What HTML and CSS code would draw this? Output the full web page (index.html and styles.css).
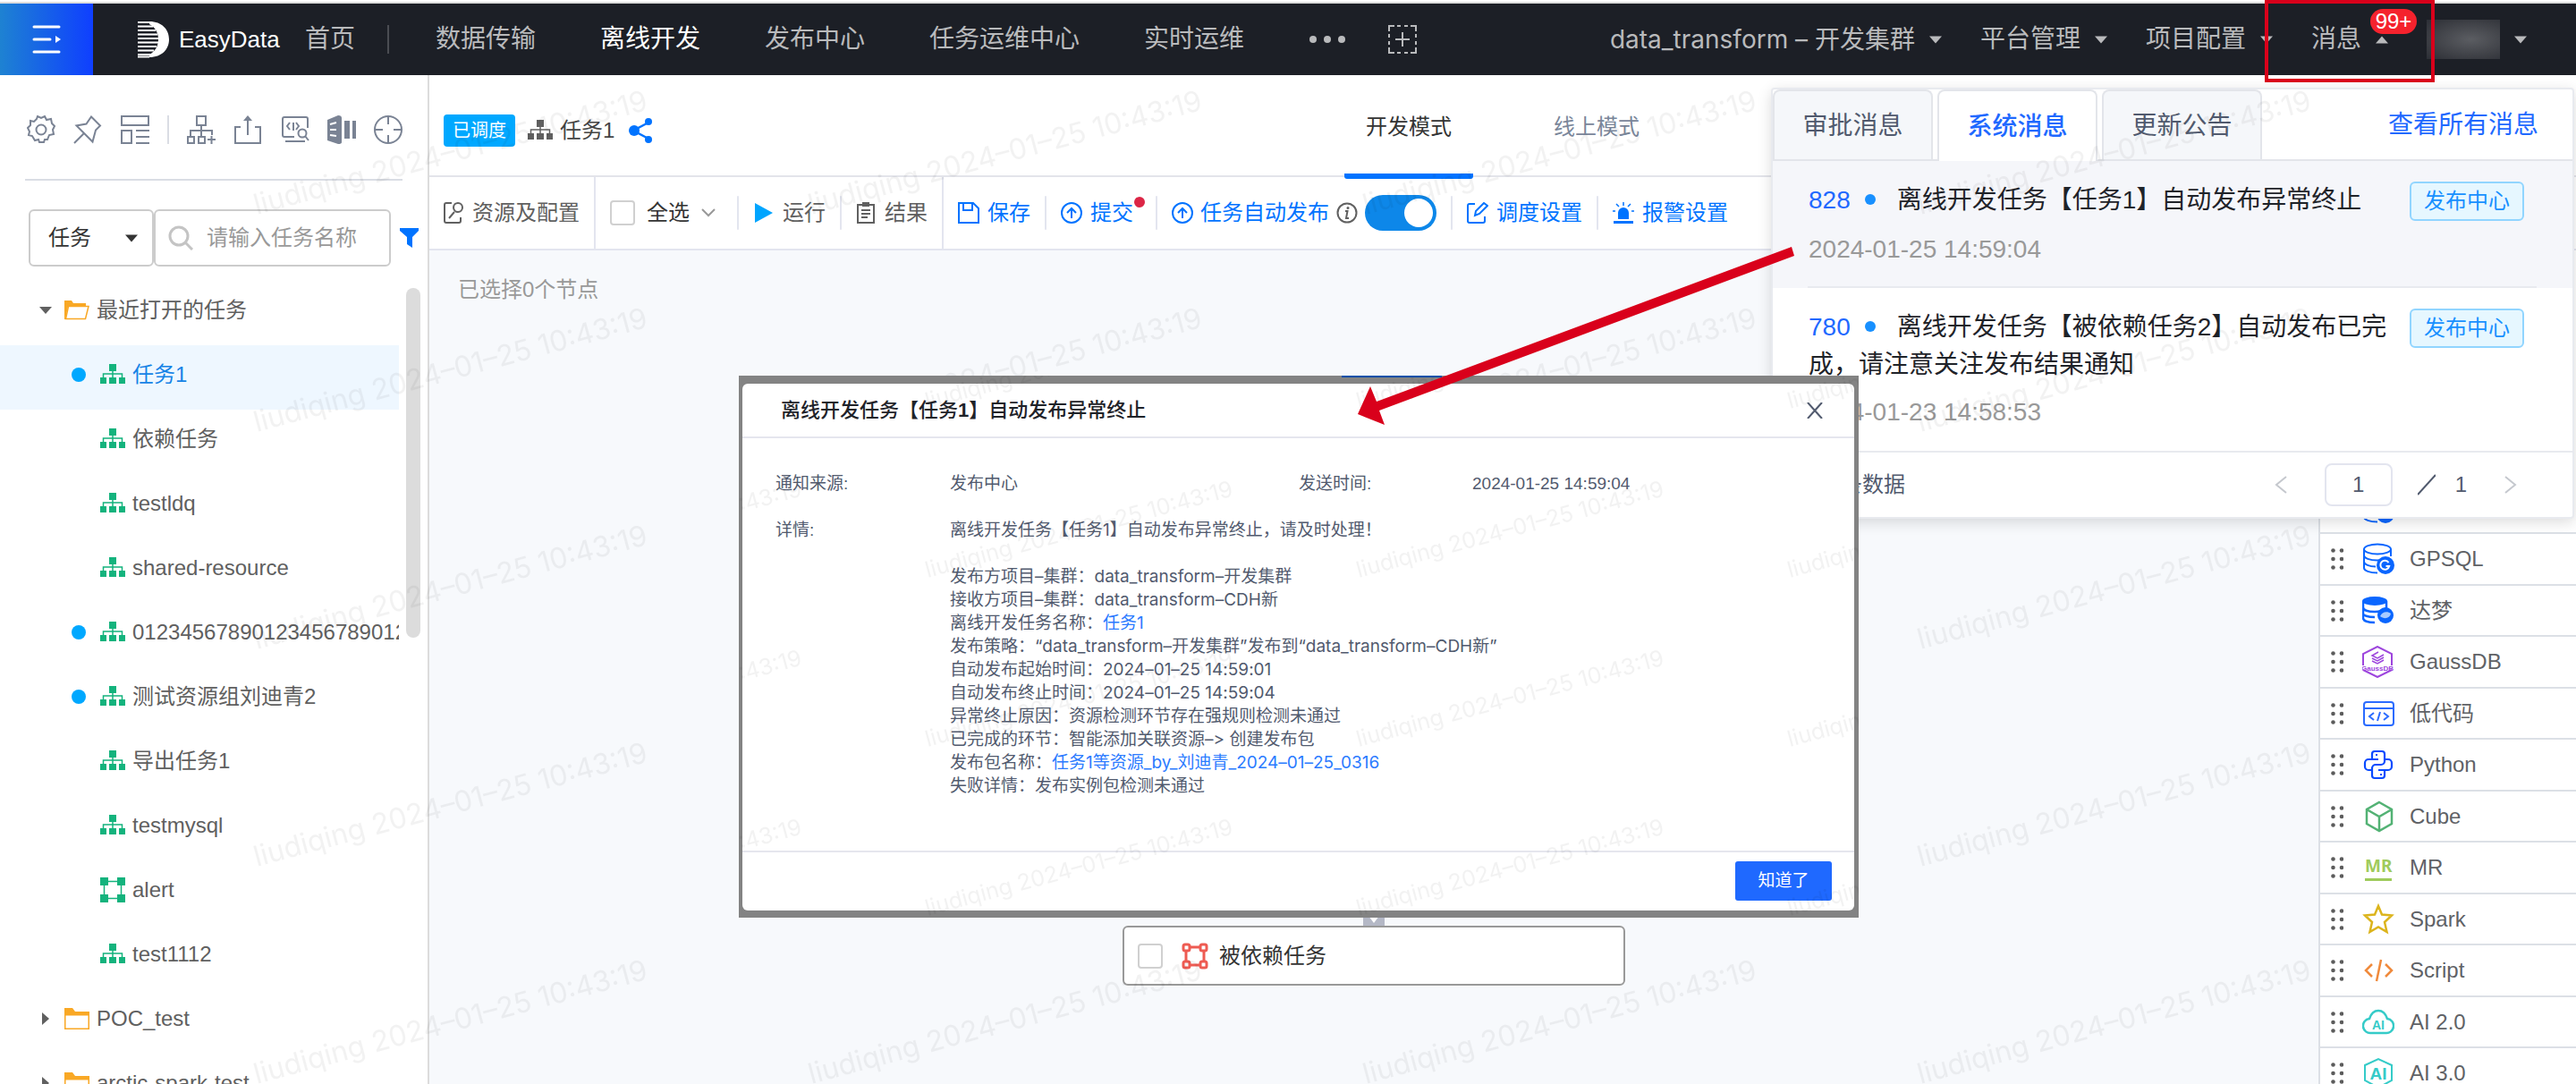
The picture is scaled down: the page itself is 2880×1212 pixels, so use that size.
FILE: index.html
```html
<!DOCTYPE html>
<html lang="zh-CN">
<head>
<meta charset="utf-8">
<title>EasyData 离线开发</title>
<link rel="stylesheet" href="styles.css">
</head>
<body>
<svg class="defs" aria-hidden="true">
  <symbol id="i-tree" viewBox="0 0 28 24"><path fill="currentColor" d="M10 0h8v8h-8zM0 15h7v7H0zM10 15h8v7h-8zM21 15h7v7h-7z"/><path d="M14 8v8M3.500 16v-5h21v5" fill="none" stroke="currentColor" stroke-width="1.500"/></symbol>
  <symbol id="i-flow" viewBox="0 0 28 28"><path fill="currentColor" d="M0 0h9v9H0zM19 0h9v9h-9zM0 19h9v9H0zM19 19h9v9h-9z"/><path d="M4.500 4.500h19v19h-19z" fill="none" stroke="currentColor" stroke-width="1.500"/></symbol>
  <symbol id="i-open" viewBox="0 0 28 22"><path d="M0 0h8l2 3h14v4H4L1 21H0z" fill="#f9a825"/><path d="M4.500 6.500h22.500l-3.500 14h-22z" fill="#fff" stroke="#f9a825" stroke-width="1.500"/></symbol>
  <symbol id="i-folder" viewBox="0 0 28 24"><path d="M.75 6v17.250h26.500V6z" fill="#fff" stroke="#f9a825" stroke-width="1.500"/><path d="M0 0h9l3 4h16v4.500H0z" fill="#f9a825"/></symbol>
  <symbol id="i-down" viewBox="0 0 14 8"><path d="M0 0h14L7 8z" fill="currentColor"/></symbol>
  <symbol id="i-up" viewBox="0 0 14 8"><path d="M0 8h14L7 0z" fill="currentColor"/></symbol>
  <symbol id="i-right" viewBox="0 0 8 14"><path d="M0 0v14l8-7z" fill="currentColor"/></symbol>
  <symbol id="i-upload" viewBox="0 0 24 24"><g fill="none" stroke="currentColor" stroke-width="2"><circle cx="12" cy="12" r="11"/><path d="M12 18V7M7 12l5-5 5 5"/></g></symbol>
  <symbol id="i-grip" viewBox="0 0 14 24"><g fill="#5c5c5c"><circle cx="2.500" cy="2.500" r="2.300"/><circle cx="12" cy="2.500" r="2.300"/><circle cx="2.500" cy="12" r="2.300"/><circle cx="12" cy="12" r="2.300"/><circle cx="2.500" cy="21.500" r="2.300"/><circle cx="12" cy="21.500" r="2.300"/></g></symbol>
  <symbol id="i-db" viewBox="0 0 36 36"><g fill="none" stroke="#0a66ff" stroke-width="2"><ellipse cx="17" cy="7" rx="15" ry="5.500"/><path d="M2 7v21c0 3 6 5.500 15 5.500M32 7v8M2 14c0 3 6 5.500 15 5.500M2 21c0 3 6 5.500 13 5.500M17 19.500c5 0 9-1 12-2.500"/></g><circle cx="26" cy="25" r="10" fill="#0a66ff"/></symbol>
</svg>

<header class="topbar">
  <button class="menu-btn" aria-label="菜单"><svg width="32" height="32" viewBox="0 0 32 32"><path d="M2 2h28M2 16h18M2 30h28" stroke="#fff" stroke-width="3" stroke-linecap="round"/><path d="M26 12v8l6-4z" fill="#fff"/></svg></button>
  <a class="logo" href="#">
    <svg width="36" height="42" viewBox="0 0 36 42"><path d="M13 1C27 1 35 10 35 21S27 41 13 41v-3c7-4 10-10 10-17S20 8 13 4z" fill="#fff"/><path d="M0 2h14M0 6.500h17M0 11h20M0 15.500h22M0 20h23M0 24.500h23M0 29h21M0 33.500h18M0 38h14M0 40.500h13" stroke="#fff" stroke-width="2"/></svg>
    <span>EasyData</span>
  </a>
  <a class="home" href="#">首页</a>
  <nav class="nav">
    <a href="#">数据传输</a><a href="#" class="on">离线开发</a><a href="#">发布中心</a><a href="#">任务运维中心</a><a href="#">实时运维</a>
    <button class="more" aria-label="更多"><svg width="42" height="10" viewBox="0 0 42 10" fill="currentColor"><circle cx="5" cy="5" r="4"/><circle cx="21" cy="5" r="4"/><circle cx="37" cy="5" r="4"/></svg></button>
  </nav>
  <button class="add" aria-label="添加"><svg width="32" height="32" viewBox="0 0 32 32" fill="none" stroke="currentColor" stroke-width="2"><path d="M1 7V1h6M25 1h6v6M31 25v6h-6M7 31H1v-6M10 1h4M18 1h4M10 31h4M18 31h4M1 10v4M1 18v4M31 10v4M31 18v4M16 8v16M8 16h16"/></svg></button>
  <div class="user-nav">
    <button class="project">data_transform – 开发集群<svg class="caret"><use href="#i-down"/></svg></button>
    <button>平台管理<svg class="caret"><use href="#i-down"/></svg></button>
    <button>项目配置<svg class="caret"><use href="#i-down"/></svg></button>
    <button class="msg">消息<svg class="caret"><use href="#i-up"/></svg><span class="count">99+</span></button>
    <button aria-label="用户"><span class="avatar"></span><svg class="caret"><use href="#i-down"/></svg></button>
  </div>
</header>

<div class="body">
  <aside class="sidebar">
    <div class="tools">
      <button aria-label="设置"><svg viewBox="0 0 32 32"><path d="M11 4l1-3 4 2 4-2 2 4 5-1 1 5 3 3-2 4 1 5-5 1-2 5h-3l-1 3h-5l-1-3-4 1-3-5-4-1 1-4-2-4 3-3v-5l4 1z"/><circle cx="16" cy="16" r="5.500"/></svg></button>
      <button aria-label="固定"><svg viewBox="0 0 32 32"><path d="M20 1.500l10 10-5 5-3.500 13-9-9-9-9 11-2zM12 20L1 31"/></svg></button>
      <button aria-label="布局"><svg viewBox="0 0 32 32"><path d="M1 1h30v10H1zM1 17h11v14H1zM17 17h15M17 24h15M17 31h15"/></svg></button>
      <i class="rule"></i>
      <button aria-label="新建任务"><svg viewBox="0 0 32 32"><path d="M11 1h10v10H11zM16 11v13M4 24v-7h24v5M1 24h7v7H1zM13 24h7v7h-7zM23 27h9M27.500 23v9"/></svg></button>
      <button aria-label="导出"><svg viewBox="0 0 32 32"><path d="M8 13H2v18h28V13h-6M16 22V4"/><path d="M11 6l5-6 5 6z" fill="currentColor" stroke="none"/></svg></button>
      <button aria-label="代码搜索"><svg viewBox="0 0 32 32"><path d="M15 24H4a2 2 0 0 1-2-2V4a2 2 0 0 1 2-2h24a2 2 0 0 1 2 2v10M10 8l-3 4 3 4M17 8l3 4-3 4M14 8v9M5 29h22"/><circle cx="24" cy="20" r="4.500"/><path d="M27 23l4 5"/></svg></button>
      <button aria-label="文档"><svg viewBox="0 0 32 32"><path d="M0 5L12 0q4 0 4 3v27q0 2-4 2L0 28zM19 6h6v20h-6zM28 6h4v20h-4z" fill="currentColor" stroke="none"/><path d="M3 10l7-2M3 16h7M3 22l7 1" stroke="#fff"/></svg></button>
      <button aria-label="定位"><svg viewBox="0 0 32 32"><circle cx="16" cy="16" r="15"/><path d="M16 1v9M16 22v9M1 16h9M22 16h9"/></svg></button>
    </div>
    <form class="search">
      <label class="kind"><select aria-label="类型"><option>任务</option></select><svg class="caret"><use href="#i-down"/></svg></label>
      <label class="query"><svg width="28" height="28" viewBox="0 0 28 28" fill="none" stroke="#c4c4c4" stroke-width="3"><circle cx="12" cy="12" r="10"/><path d="M19 19l8 8"/></svg><input type="text" placeholder="请输入任务名称" aria-label="任务名称"></label>
      <button type="button" class="filter" aria-label="筛选"><svg width="21" height="22" viewBox="0 0 21 22"><path d="M0 0h21v3l-7 7v12l-6-4v-8L0 3z" fill="#0073ff"/></svg></button>
    </form>
    <div class="tree-wrap">
      <ul class="tree">
        <li><a class="dir" href="#"><svg class="arrow"><use href="#i-down"/></svg><svg class="ficon"><use href="#i-open"/></svg>最近打开的任务</a></li>
        <li><a class="on" href="#"><i class="dot"></i><svg class="ticon"><use href="#i-tree"/></svg>任务1</a></li>
        <li><a href="#"><i></i><svg class="ticon"><use href="#i-tree"/></svg>依赖任务</a></li>
        <li><a href="#"><i></i><svg class="ticon"><use href="#i-tree"/></svg>testldq</a></li>
        <li><a href="#"><i></i><svg class="ticon"><use href="#i-tree"/></svg>shared-resource</a></li>
        <li><a href="#"><i class="dot"></i><svg class="ticon"><use href="#i-tree"/></svg>01234567890123456789012</a></li>
        <li><a href="#"><i class="dot"></i><svg class="ticon"><use href="#i-tree"/></svg>测试资源组刘迪青2</a></li>
        <li><a href="#"><i></i><svg class="ticon"><use href="#i-tree"/></svg>导出任务1</a></li>
        <li><a href="#"><i></i><svg class="ticon"><use href="#i-tree"/></svg>testmysql</a></li>
        <li><a href="#"><i></i><svg class="ticon flow"><use href="#i-flow"/></svg>alert</a></li>
        <li><a href="#"><i></i><svg class="ticon"><use href="#i-tree"/></svg>test1112</a></li>
        <li><a class="dir" href="#"><svg class="arrow"><use href="#i-right"/></svg><svg class="ficon"><use href="#i-folder"/></svg>POC_test</a></li>
        <li><a class="dir" href="#"><svg class="arrow"><use href="#i-right"/></svg><svg class="ficon"><use href="#i-folder"/></svg>arctic-spark-test</a></li>
      </ul>
      <div class="thumb"></div>
    </div>
  </aside>

  <main class="main">
    <div class="titlebar">
      <div class="task-title">
        <span class="state">已调度</span>
        <svg class="ticon"><use href="#i-tree"/></svg>
        <span>任务1</span>
        <svg class="share" width="26" height="28" viewBox="0 0 26 28"><path d="M22 5L5 14l17 9" fill="none" stroke="#0073ff" stroke-width="2.500"/><g fill="#0073ff"><circle cx="22" cy="4" r="4"/><circle cx="6" cy="14" r="6"/><circle cx="22" cy="24" r="4"/></g></svg>
      </div>
      <div class="modes"><button class="on">开发模式</button><button>线上模式</button></div>
    </div>
    <div class="toolbar">
      <section>
        <button class="dark"><svg width="22" height="24" viewBox="0 0 22 24" fill="none" stroke="currentColor" stroke-width="2"><path d="M9 1H3a2 2 0 0 0-2 2v18a2 2 0 0 0 2 2h14a2 2 0 0 0 2-2v-4M12 11l-6 7"/><circle cx="16" cy="6" r="5"/></svg>资源及配置</button>
      </section>
      <section>
        <label class="all"><input type="checkbox" class="box">全选<svg width="16" height="10" viewBox="0 0 16 10" fill="none" stroke="#999" stroke-width="2"><path d="M1 1l7 7 7-7"/></svg></label>
        <i class="sep wide"></i>
        <button class="dark"><svg width="22" height="24" viewBox="0 0 22 24"><path d="M1 1v22l20-11z" fill="#00a5ff"/></svg>运行</button>
        <i class="sep"></i>
        <button class="dark"><svg width="22" height="24" viewBox="0 0 22 24" fill="none" stroke="currentColor" stroke-width="2"><path d="M2 3h18v20H2zM6 9h10M6 13h10M6 17h7"/><path d="M7 0h8v5H7z" fill="currentColor" stroke="none"/></svg>结果</button>
      </section>
      <section class="last">
        <button><svg width="24" height="24" viewBox="0 0 24 24" fill="none" stroke="currentColor" stroke-width="2"><path d="M1 1h16l6 6v16H1zM6 1v8h10V1"/></svg>保存</button>
        <i class="sep"></i>
        <button class="submit"><svg width="24" height="24"><use href="#i-upload"/></svg>提交<i class="reddot"></i></button>
        <i class="sep"></i>
        <label class="auto"><svg width="24" height="24"><use href="#i-upload"/></svg>任务自动发布<svg class="info" width="24" height="24" viewBox="0 0 24 24"><g fill="none" stroke="currentColor" stroke-width="2"><circle cx="12" cy="12" r="10.500"/><path d="M10 10h2.500l-1.500 8h3"/></g><circle cx="13" cy="6.500" r="1.500" fill="currentColor"/></svg><input type="checkbox" class="switch" checked></label>
        <i class="sep"></i>
        <button><svg width="24" height="24" viewBox="0 0 24 24" fill="none" stroke="currentColor" stroke-width="2"><path d="M9 2H3a2 2 0 0 0-2 2v17a2 2 0 0 0 2 2h15a2 2 0 0 0 2-2v-5M9 15l1-5 9-9 4 3-9 9z"/></svg>调度设置</button>
        <i class="sep"></i>
        <button><svg width="24" height="24" viewBox="0 0 24 24"><path d="M1 21h22v3H1zM6 19v-7a6 6 0 0 1 12 0v7z" fill="currentColor"/><path d="M12 0v4M4 2l3 3M20 2l-3 3M0 10h3M21 10h3" stroke="currentColor" stroke-width="1.500"/></svg>报警设置</button>
      </section>
    </div>
    <div class="work">
      <div class="canvas">
        <p>已选择0个节点</p>
        <svg class="joint" width="24" height="14" viewBox="0 0 24 14"><path d="M0 0h24v14H0z" fill="#b4b8c6"/><path d="M6 0h12l-6 8z" fill="#fff"/></svg>
        <label class="node"><input type="checkbox" class="box"><svg width="30" height="30" viewBox="0 0 30 30" fill="none" stroke="#ee5b52" stroke-width="3"><path d="M9 5h12M9 25h12M5 9v12M25 9v12"/><rect x="2" y="2" width="7" height="7" rx="2"/><rect x="21" y="2" width="7" height="7" rx="2"/><rect x="2" y="21" width="7" height="7" rx="2"/><rect x="21" y="21" width="7" height="7" rx="2"/></svg>被依赖任务</label>
      </div>
      <ul class="palette">
        <li><svg class="pic first"><use href="#i-db"/></svg></li>
        <li><svg class="grip"><use href="#i-grip"/></svg><svg class="pic" viewBox="0 0 36 36"><use href="#i-db" width="36" height="36"/><path d="M29.500 22a5 5 0 1 0 .7 4H26.500" fill="none" stroke="#fff" stroke-width="2"/></svg>GPSQL</li>
        <li><svg class="grip"><use href="#i-grip"/></svg><svg class="pic" viewBox="0 0 36 36"><ellipse cx="14" cy="7" rx="14" ry="5" fill="#0a66ff"/><path d="M1 7v19c0 3 5 5 13 5M27 7v9M1 14c0 3 5 5 13 5 5 0 9-1 13-4M1 21c0 2 5 4 13 4" fill="none" stroke="#0a66ff" stroke-width="2.500"/><circle cx="26" cy="23" r="9" fill="#0a66ff"/><path d="M20 24c2-5 8-6 12-3-1 5-7 7-12 3z" fill="#a9cbff"/></svg>达梦</li>
        <li><svg class="grip"><use href="#i-grip"/></svg><svg class="pic" viewBox="0 0 36 36"><path d="M1 22V9L17 1l16 8v13M1 27l16 8 16-8" fill="none" stroke="#9d45dd" stroke-width="2"/><path d="M18 7l-7 4 6 3 7-4M11 14l6 3 7-4M11 17l6 3 7-4" fill="none" stroke="#9d45dd" stroke-width="1.500"/><text x="17" y="28" class="gauss" text-anchor="middle">GaussDB</text></svg>GaussDB</li>
        <li><svg class="grip"><use href="#i-grip"/></svg><svg class="pic" viewBox="0 0 36 36" fill="none" stroke="#2a6bff" stroke-width="2"><rect x="2" y="5" width="33" height="26" rx="3"/><path d="M2 12h33M13 17l-5 4 5 4M24 17l5 4-5 4M20 16l-3 10"/></svg>低代码</li>
        <li><svg class="grip"><use href="#i-grip"/></svg><svg class="pic" viewBox="0 0 36 36" fill="none" stroke="#0a4bff" stroke-width="2.200"><path d="M11 24H7a4 4 0 0 1-4-4v-4a4 4 0 0 1 4-4h11M11 12V6a3 3 0 0 1 3-3h8a3 3 0 0 1 3 3v8a4 4 0 0 1-4 4h-6a4 4 0 0 0-4 4v8a3 3 0 0 0 3 3h8a3 3 0 0 0 3-3v-6M25 12h4a4 4 0 0 1 4 4v4a4 4 0 0 1-4 4H18M15 7h2M20 29h2"/></svg>Python</li>
        <li><svg class="grip"><use href="#i-grip"/></svg><svg class="pic" viewBox="0 0 36 36" fill="none" stroke="#53b274" stroke-width="2.500"><path d="M19 2l14 8v16l-14 8-14-8V10zM5 10l14 8 14-8M19 18v16"/></svg>Cube</li>
        <li><svg class="grip"><use href="#i-grip"/></svg><span class="pic mr">MR</span>MR</li>
        <li><svg class="grip"><use href="#i-grip"/></svg><svg class="pic" viewBox="0 0 36 36" fill="none" stroke="#dcb41c" stroke-width="2.500"><path d="M18 3l4 9.500 11 1-8 7.500 2.500 11L18 26.500 8.500 32 11 21l-8-7.500 11-1z"/></svg>Spark</li>
        <li><svg class="grip"><use href="#i-grip"/></svg><svg class="pic" viewBox="0 0 36 36" fill="none" stroke="#f08a3c" stroke-width="2.500"><path d="M11 11l-7 7 7 7M26 11l7 7-7 7M21 6l-5 24"/></svg>Script</li>
        <li><svg class="grip"><use href="#i-grip"/></svg><svg class="pic" viewBox="0 0 36 36"><path d="M10 30a8 8 0 0 1-2-16C10 8 14 5 18 5s8 3 10 9a8 8 0 0 1-2 16z" fill="none" stroke="#35cbc8" stroke-width="2.500"/><text x="18" y="26" class="ai" font-size="14" text-anchor="middle">AI</text></svg>AI 2.0</li>
        <li><svg class="grip"><use href="#i-grip"/></svg><svg class="pic" viewBox="0 0 36 36"><path d="M3 26V9l15-7 15 7v17l-15 8z" fill="none" stroke="#35cbc8" stroke-width="2"/><text x="18" y="25" class="ai" font-size="19" text-anchor="middle">AI</text></svg>AI 3.0</li>
      </ul>
    </div>
  </main>
</div>

<section class="messages">
  <div class="tabs">
    <button>审批消息</button><button class="on">系统消息</button><button>更新公告</button>
    <a href="#">查看所有消息</a>
  </div>
  <article class="unread">
    <div class="row"><h3><b>828</b><i></i>离线开发任务【任务1】自动发布异常终止</h3><span class="tag">发布中心</span></div>
    <time>2024-01-25 14:59:04</time>
  </article>
  <article>
    <div class="row"><h3><b>780</b><i></i>离线开发任务【被依赖任务2】自动发布已完成，请注意关注发布结果通知</h3><span class="tag">发布中心</span></div>
    <time>2024-01-23 14:58:53</time>
  </article>
  <footer>
    <span class="total">条数据</span>
    <button aria-label="上一页"><svg width="14" height="20" viewBox="0 0 14 20"><path d="M13 1L2 10l11 9"/></svg></button>
    <input type="text" value="1" aria-label="页码">
    <span class="pages"><svg width="20" height="24" viewBox="0 0 20 24"><path d="M0 23L20 1" stroke="#515a6e" stroke-width="2"/></svg>1</span>
    <button aria-label="下一页"><svg width="14" height="20" viewBox="0 0 14 20"><path d="M1 1l11 9-11 9"/></svg></button>
  </footer>
</section>

<svg class="mark page-mark" aria-hidden="true">
  <defs><pattern id="wm" width="620" height="243" patternUnits="userSpaceOnUse" y="10"><text x="24" y="230" transform="rotate(-15 24 230)">liudiqing 2024–01–25 10:43:19</text></pattern></defs>
  <rect width="100%" height="100%" fill="url(#wm)"/>
</svg>

<div class="shade">
  <div class="dialog" role="dialog" aria-labelledby="dlg-title">
    <header><h2 id="dlg-title">离线开发任务【任务<b>1</b>】自动发布异常终止</h2><button aria-label="关闭"><svg width="18" height="18" viewBox="0 0 18 18"><path d="M1 0l16 18M17 0L1 18" stroke="#515a6e" stroke-width="2"/></svg></button></header>
    <dl>
      <dt>通知来源:</dt><dd>发布中心</dd>
      <dt>发送时间:</dt><dd class="stamp">2024-01-25 14:59:04</dd>
      <dt>详情:</dt>
      <dd class="detail">离线开发任务【任务1】自动发布异常终止，请及时处理！<br><br>发布方项目–集群：data_transform–开发集群<br>接收方项目–集群：data_transform–CDH新<br>离线开发任务名称：<a href="#">任务1</a><br>发布策略：“data_transform–开发集群”发布到“data_transform–CDH新”<br>自动发布起始时间：2024–01–25 14:59:01<br>自动发布终止时间：2024–01–25 14:59:04<br>异常终止原因：资源检测环节存在强规则检测未通过<br>已完成的环节：智能添加关联资源–&gt; 创建发布包<br>发布包名称：<a href="#">任务1等资源_by_刘迪青_2024–01–25_0316</a><br>失败详情：发布实例包检测未通过</dd>
    </dl>
    <footer><button>知道了</button></footer>
  </div>
  <svg class="mark" aria-hidden="true">
    <defs><pattern id="wm2" x="191" y="47" width="482" height="189" patternUnits="userSpaceOnUse"><text x="20" y="179" transform="rotate(-15 20 179)">liudiqing 2024–01–25 10:43:19</text></pattern></defs>
    <rect width="100%" height="100%" fill="url(#wm2)"/>
  </svg>
  <i class="edge"></i>
</div>

<div class="frame"></div>
<svg class="pointer" width="490" height="200" viewBox="0 0 490 200" aria-hidden="true"><path d="M487 1L490 11 26 184 32 200 2 188 16 157 23 174z" fill="#d9001b"/></svg>
</body>
</html>
```
FILE: styles.css
```css
* { box-sizing: border-box; }
body {
  position: relative;
  display: flex;
  flex-direction: column;
  height: 100vh;
  margin: 0;
  overflow: hidden;
  background: #fff;
  color: #606266;
  font: 24px/36px "Liberation Sans", "Noto Sans CJK SC", sans-serif;
}
button, input, select { font: inherit; color: inherit; }
button { display: flex; align-items: center; padding: 0; border: 0; background: none; white-space: nowrap; cursor: pointer; }
a { color: inherit; text-decoration: none; }
ul { margin: 0; padding: 0; list-style: none; }
svg { flex: none; display: block; }
.defs { position: absolute; width: 0; height: 0; }
.caret { width: 14px; height: 9px; }
.box { appearance: none; width: 28px; height: 28px; margin: 0; border: 2px solid #d0d0d0; border-radius: 4px; background: #fff; }

/* top bar */
.topbar { display: flex; flex: none; align-items: center; height: 82px; margin-top: 2px; border-top: 2px solid #ddd; background: #1c1f26; color: #b9babc; font-size: 28px; }
.menu-btn { justify-content: center; width: 104px; height: 80px; background: linear-gradient(90deg, #1e82d2, #0f3fff); }
.logo { display: flex; align-items: center; gap: 10px; margin-left: 50px; color: #fff; }
.logo span { width: 112px; font-size: 26px; line-height: 42px; }
.home { margin-left: 29px; padding-right: 36px; border-right: 2px solid #4a4c52; line-height: 32px; }
.nav { display: flex; align-items: center; gap: 72px; margin-left: 52px; }
.nav .on { color: #fff; }
.add { margin-left: 47px; }
.user-nav { display: flex; gap: 43px; margin-left: auto; padding-right: 55px; }
.user-nav button { gap: 16px; }
.project { font-family: Inter, "Noto Sans CJK SC", sans-serif; }
.msg { position: relative; }
.count { position: absolute; top: -12px; left: 66px; width: 52px; height: 28px; border-radius: 14px; background: #f5222d; color: #fff; font-size: 24px; line-height: 28px; text-align: center; }
.avatar { width: 82px; height: 44px; background: radial-gradient(ellipse at 60% 50%, #5b5d62, #3a3c42 70%, #2c2f36); }

/* side bar */
.body { display: flex; flex: 1; min-height: 0; }
.sidebar { display: flex; flex: none; flex-direction: column; width: 480px; border-right: 2px solid #dcdcdc; }
.tools { display: flex; justify-content: space-between; margin: 0 28px; padding: 45px 0 39px 2px; border-bottom: 2px solid #dadde4; color: #7a8394; }
.tools svg { width: 32px; height: 32px; fill: none; stroke: currentColor; stroke-width: 2; }
.rule { width: 2px; background: #dadde4; }
.search { display: flex; align-items: center; margin: 32px 10px 16px 32px; color: #333; }
.kind, .query { display: flex; align-items: center; height: 64px; border: 2px solid #ccc; border-radius: 6px; }
.kind { width: 140px; padding: 0 16px 0 20px; }
.kind select { flex: 1; min-width: 0; padding: 0; border: 0; background: none; appearance: none; outline: 0; }
.query { flex: 1; gap: 15px; padding-left: 14px; }
.query input { width: 180px; padding: 0; border: 0; outline: 0; background: none; }
.query input::placeholder { color: #999; opacity: 1; }
.filter { margin-left: 10px; }
.tree-wrap { display: flex; flex: 1; min-height: 0; overflow: hidden; }
.tree { flex: 1; min-width: 0; color: #606060; }
.tree a { display: flex; align-items: center; gap: 8px; height: 72px; padding: 0 0 7px 80px; overflow: hidden; white-space: nowrap; }
.tree a.dir { padding-left: 44px; }
.tree .on { background: #eef7ff; color: #1683e6; }
.tree li i { flex: none; width: 16px; height: 16px; margin-right: 8px; border-radius: 8px; }
.dot { background: #00a8ff; }
.ticon { width: 28px; height: 24px; color: #14b37d; }
.ticon.flow { height: 28px; }
.arrow { width: 14px; height: 14px; margin-right: 6px; }
.ficon { width: 28px; height: 24px; }
.thumb { flex: none; width: 16px; height: 391px; margin: 8px 8px 0; border-radius: 8px; background: #dcdcdc; }

/* task header */
.main { display: flex; flex: 1; flex-direction: column; min-width: 0; }
.titlebar { display: grid; flex: none; grid-template-columns: 1fr auto 1fr; height: 114px; border-bottom: 2px solid #e3e4ea; }
.task-title { display: flex; align-items: center; gap: 8px; padding: 8px 0 0 16px; color: #444; }
.task-title .ticon { margin-left: 6px; color: #606060; }
.state { padding: 0 10px; border-radius: 4px; background: #00a8ff; color: #fff; font-size: 20px; }
.share { margin-left: 8px; }
.modes { display: flex; gap: 66px; }
.modes button { justify-content: center; width: 144px; height: 116px; padding-top: 6px; border-bottom: 6px solid transparent; border-radius: 3px; color: #7a869a; }
.modes .on { border-color: #0073ff; color: #333; }
.toolbar { display: flex; flex: none; height: 82px; border-bottom: 2px solid #e3e5ef; }
.toolbar section { display: flex; align-items: center; padding: 0 16px; border-right: 2px solid #e3e5ef; }
.toolbar .last { border: 0; }
.toolbar button, .toolbar label { display: flex; align-items: center; gap: 9px; color: #0073ff; white-space: nowrap; }
.toolbar .dark { gap: 10px; color: #606060; }
.toolbar .all { gap: 13px; color: #333; }
.toolbar .auto { gap: 8px; }
.sep { flex: none; width: 2px; height: 38px; margin: 0 16px; border-radius: 2px; background: #e3e5ef; }
.sep.wide { margin: 0 17px 0 24px; }
.submit { position: relative; padding-right: 9px; }
.reddot { position: absolute; top: 0; right: -4px; width: 12px; height: 12px; border-radius: 6px; background: #dc2646; }
.info { color: #606060; }
.switch { appearance: none; display: flex; align-items: center; width: 80px; height: 40px; margin: 0; padding-left: 44px; border-radius: 20px; background: #0d87e9; }
.switch::before { content: ""; width: 32px; height: 32px; border-radius: 16px; background: #fff; }

/* work area */
.work { display: flex; flex: 1; min-height: 0; background: #f7f9fc; }
.canvas { position: relative; flex: 1; }
.canvas p { margin: 26px 32px; color: #999; }
.joint { position: absolute; top: 744px; left: 50%; margin-left: -12px; }
.node { position: absolute; top: 755px; left: 50%; display: flex; align-items: center; gap: 12px; width: 562px; height: 67px; margin-left: -281px; padding-left: 15px; border: 2px solid #999; border-radius: 6px; background: #fff; color: #333; }
.node svg { margin-left: 9px; }
.palette { flex: none; width: 288px; padding-top: 260px; border-left: 2px solid #dce0e6; background: #fff; overflow: hidden; }
.palette li { display: flex; align-items: center; height: 57px; padding-left: 12px; border-bottom: 2px solid #dce0e6; }
.palette li:nth-child(even) { height: 58px; }
.grip { width: 14px; height: 24px; margin-right: 21px; }
.pic { width: 36px; height: 36px; margin-right: 17px; }
.pic.first { margin-left: 35px; }
.gauss { fill: #9d45dd; font-size: 8px; font-weight: bold; }
.ai { fill: #35cbc8; font-weight: bold; }
.mr { width: 30px; height: 30px; margin: 0 20px 0 3px; border-bottom: 3px solid #9fcb5c; color: #9fcb5c; font: bold 19px/26px "Noto Sans", sans-serif; }

/* message panel */
.messages { position: absolute; top: 98px; right: 2px; width: 898px; border: 2px solid #e8eaef; border-radius: 4px; background: #fff; box-shadow: 0 4px 16px rgba(0, 0, 0, .14); font-size: 28px; line-height: 42px; }
.tabs { display: flex; gap: 5px; height: 80px; border-bottom: 2px solid #e3e5ea; }
.tabs button { justify-content: center; width: 179px; padding-top: 2px; border: 2px solid #e3e5ea; border-bottom: 0; border-radius: 8px 8px 0 0; background: #f5f7fa; color: #515a6e; }
.tabs .on { height: 80px; background: #fff; color: #1f69ff; font-weight: 500; }
.tabs a { margin: 19px 38px 0 auto; color: #1f69ff; }
.messages article { position: relative; padding: 23px 54px 22px 40px; }
.messages .unread { background: #f5f6fa; }
.unread::after { content: ""; position: absolute; right: 40px; bottom: 0; left: 39px; height: 2px; background: #e8eaef; }
.row { display: flex; align-items: flex-start; justify-content: space-between; gap: 20px; }
.row h3 { flex: 1; margin: 0; color: #1f2329; font-size: 28px; font-weight: 400; }
.row b { color: #1f69ff; font-weight: 400; }
.row i { display: inline-block; width: 12px; height: 12px; margin: 0 24px 4px 16px; border-radius: 6px; background: #1890ff; }
.tag { flex: none; height: 44px; padding: 0 14px; border: 2px solid #91d5ff; border-radius: 6px; background: #e6f7ff; color: #1890ff; font-size: 24px; line-height: 40px; }
.messages time { display: block; margin-top: 11px; color: #999; }
.messages footer { display: flex; align-items: center; height: 74px; padding-right: 62px; border-top: 2px solid #e8eaef; color: #515a6e; font-size: 24px; }
.total { margin: 0 auto 0 76px; }
.messages footer path { fill: none; }
.messages footer button { color: #c5c8ce; }
.messages footer button path { stroke: currentColor; stroke-width: 2; }
.messages footer input { width: 76px; height: 48px; margin: 0 28px 0 42px; border: 2px solid #e3e5ef; border-radius: 8px; text-align: center; }
.pages { display: flex; align-items: center; gap: 22px; margin-right: 42px; }

/* notification dialog */
.shade { position: absolute; top: 420px; right: 802px; left: 826px; padding: 9px 5px 8px 4px; background: #838383; }
.dialog { border-radius: 6px; background: #fff; color: #515a6e; font-size: 19px; line-height: 26px; }
.dialog header { display: flex; align-items: center; justify-content: space-between; height: 61px; padding: 0 35px 0 43px; border-bottom: 2px solid #e5e6ee; }
.dialog h2 { margin: 0; color: #1f2329; font-size: 22px; font-weight: 500; }
.dialog dl { display: grid; grid-template-columns: 195px 390px 194px 1fr; row-gap: 26px; margin: 0; padding: 38px 37px 59px; }
.dialog dd { margin: 0; }
.dialog .detail { grid-column: 2 / -1; font-family: Inter, "Noto Sans CJK SC", sans-serif; font-feature-settings: "calt" 0; }
.dialog dl a { color: #2b7bff; }
.dialog footer { display: flex; justify-content: flex-end; padding: 10px 25px 11px; border-top: 2px solid #e5e6ee; }
.dialog footer button { justify-content: center; width: 108px; height: 44px; border-radius: 3px; background: #1f69ff; color: #fff; }
.edge { position: absolute; top: 0; left: 674px; width: 112px; height: 2px; background: #0050a8; }

/* watermark */
.mark { position: absolute; top: 0; left: 0; width: 100%; height: 100%; pointer-events: none; }
.mark text { fill: rgba(0, 0, 0, .05); font: 25px Inter, sans-serif; }
.page-mark { left: 263px; width: calc(100% - 400px); }
.page-mark text { font-size: 32px; }

/* annotation */
.frame { position: absolute; top: 0; right: 158px; width: 190px; height: 92px; border: 4px solid #d9001b; }
.pointer { position: absolute; top: 275px; left: 1516px; }
```
